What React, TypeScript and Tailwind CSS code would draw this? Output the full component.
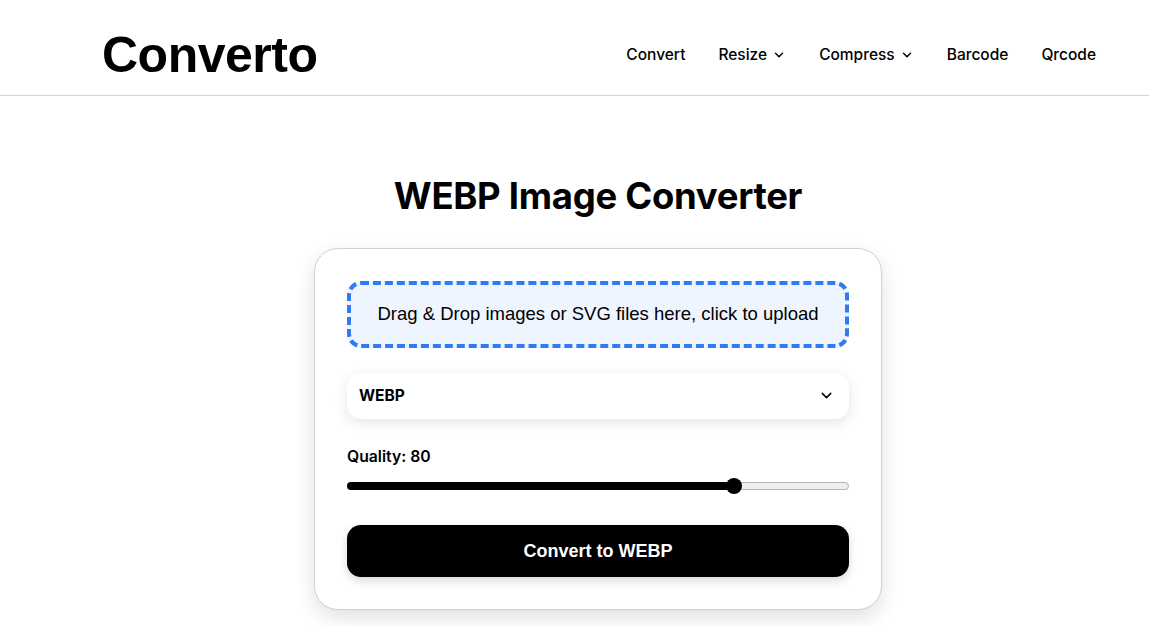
import { ChevronDown } from "lucide-react";

const navItems = [
  { label: "Convert", menu: false },
  { label: "Resize", menu: true },
  { label: "Compress", menu: true },
  { label: "Barcode", menu: false },
  { label: "Qrcode", menu: false },
];

function Header() {
  return (
    <header className="h-[96px] border-b border-[#d4d4d4] flex items-center justify-between pt-[15px] pl-[102px] pr-[53px]">
      <h1 className="text-[50px] font-bold tracking-[-0.5px] text-black font-['Liberation_Sans',sans-serif] leading-none">
        Converto
      </h1>
      <nav className="flex items-center gap-[33px] text-[15.5px] text-black font-['Inter',sans-serif] font-medium">
        {navItems.map((item) => (
          <div key={item.label} className="flex items-center gap-[5px]">
            <span>{item.label}</span>
            {item.menu && <ChevronDown size={14} strokeWidth={2.5} />}
          </div>
        ))}
      </nav>
    </header>
  );
}

export default function App() {
  const quality = 80;

  return (
    <div className="min-h-[626px] bg-white font-['Inter',sans-serif] text-black">
      <Header />

      <main className="flex flex-col items-center pt-[82px] pl-[47px]">
        <h2 className="text-[36.5px] font-bold leading-none tracking-[-0.3px]">WEBP Image Converter</h2>

        <div className="mt-[33px] w-[568px] rounded-[24px] border border-[#d1d1d1] bg-white p-[32px] shadow-[0_8px_20px_rgba(0,0,0,0.12)]">
          {/* Drop zone */}
          <div className="h-[67px] rounded-[14px] border-[4px] border-dashed border-[#2f7bf5] bg-[#eef5ff] flex items-center justify-center">
            <span className="text-[18.5px] font-['Liberation_Sans',sans-serif] text-black">
              Drag &amp; Drop images or SVG files here, click to upload
            </span>
          </div>

          {/* Format select */}
          <div className="mt-[25px] h-[46px] rounded-[14px] bg-white shadow-[0_4px_14px_rgba(0,0,0,0.1)] flex items-center justify-between pl-[12px] pr-[14px]">
            <span className="text-[15.5px] font-bold">WEBP</span>
            <ChevronDown size={17} strokeWidth={2} />
          </div>

          {/* Quality slider */}
          <div className="mt-[30px]">
            <div className="text-[15.75px] font-semibold leading-none">Quality: {quality}</div>
            <div className="relative mt-[14px] h-[16px] flex items-center">
              <div className="h-[8px] w-full rounded-full border border-[#b5b5b5] bg-[#efefef]" />
              <div
                className="absolute left-0 h-[8px] rounded-full bg-black"
                style={{ width: `${((quality - 1) / 99) * 100 * 0.775 / 0.8}%` }}
              />
              <div className="absolute left-[379px] h-[16px] w-[16px] rounded-full bg-black" />
            </div>
          </div>

          {/* Convert button */}
          <button className="mt-[31px] h-[52px] w-full rounded-[14px] bg-black text-white text-[18px] font-bold font-['Liberation_Sans',sans-serif] shadow-[0_4px_10px_rgba(0,0,0,0.15)]">
            Convert to WEBP
          </button>
        </div>
      </main>
    </div>
  );
}
